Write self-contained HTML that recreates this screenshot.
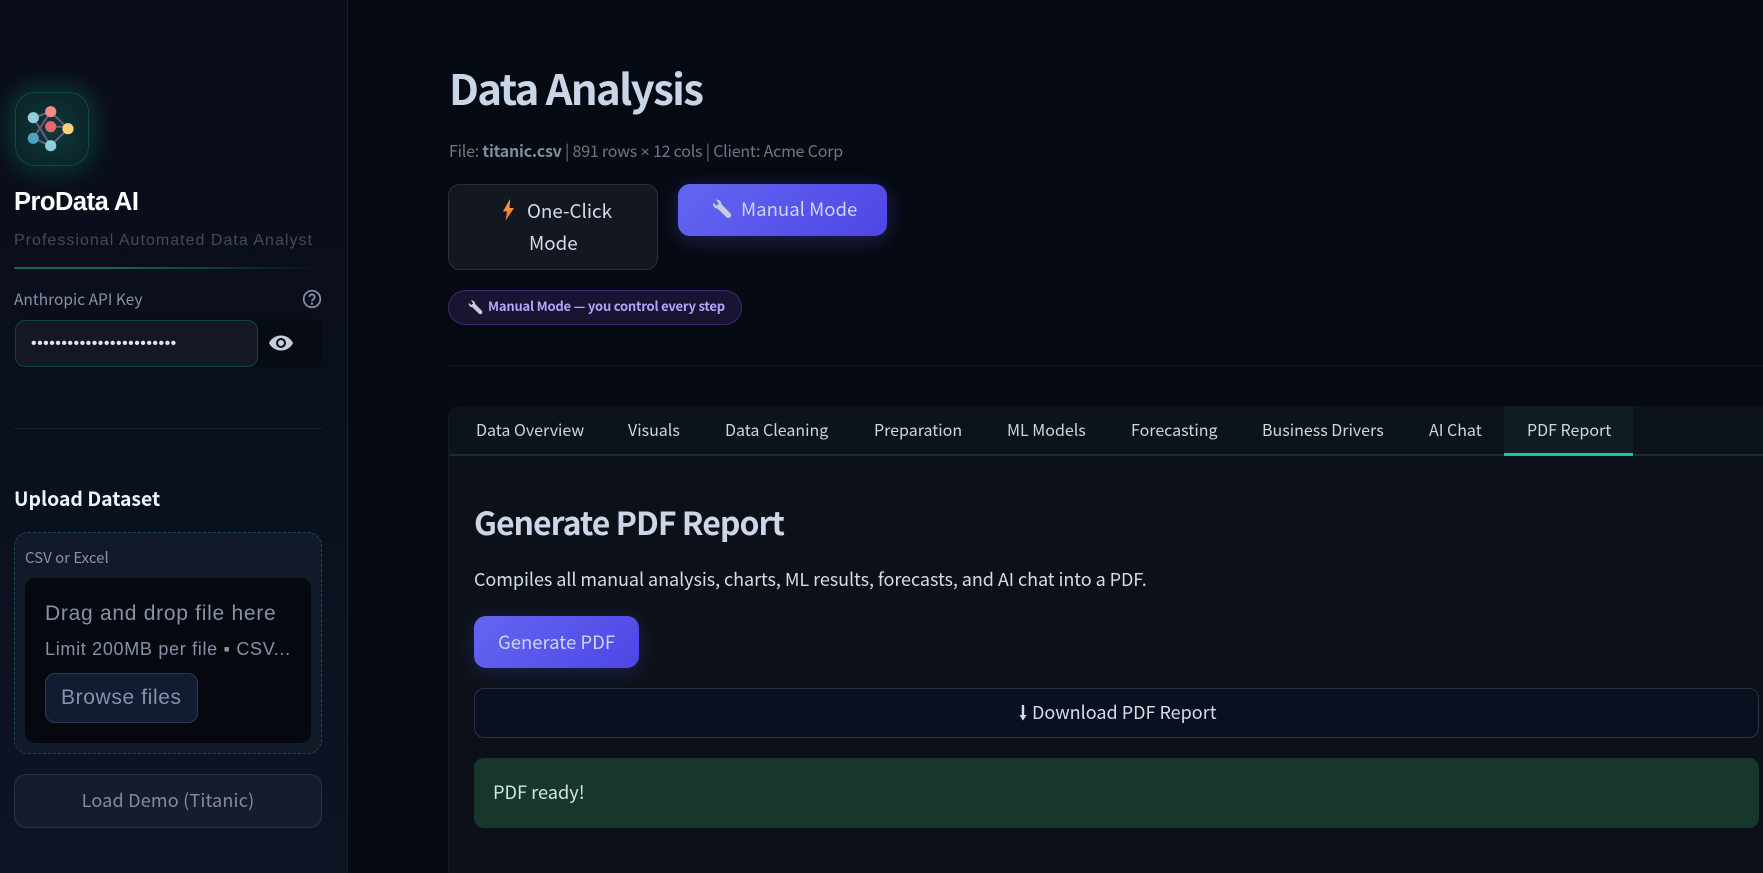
<!DOCTYPE html>
<html><head><meta charset="utf-8"><style>
*{box-sizing:border-box;margin:0;padding:0}
html,body{width:1763px;height:873px;overflow:hidden;background:#060a13}
body{position:relative;font-family:"Noto Sans CJK JP","Liberation Sans",sans-serif;color:#d5dce8}
.a{position:absolute;white-space:nowrap}
.g{font-family:"Liberation Sans","DejaVu Sans",sans-serif}
.tab{position:absolute;top:415px;line-height:28px;font-size:16px;color:#cdd5e0;white-space:nowrap}
</style></head><body>
<div class="a" style="left:0;top:0;width:348px;height:873px;background:linear-gradient(180deg,#0a0e18 0%,#0a0f1c 45%,#0d1424 100%);border-right:1px solid #12232b"></div>
<div class="a" style="left:15px;top:92px;width:74px;height:74px;border-radius:20px;background:radial-gradient(circle,#0d3a3a 0%,#0b1f25 100%);border:1px solid #0f4a46;box-shadow:0 0 28px rgba(16,185,150,.36)"></div>
<svg class="a" style="left:15px;top:92px" width="74" height="74" viewBox="15 92 74 74">
<g stroke="#6b5b7b" stroke-width="2" fill="none"><path d="M33.300 117.700L50.700 111.700L68 128.700L50.700 145.700L33.300 138.300M33.300 117.700L50.700 145.700M50.700 111.700L33.300 138.300M50.700 126.700H68"/></g>
<circle cx="50.700" cy="111.700" r="5.600" fill="#f28b82"/><circle cx="33.300" cy="117.700" r="5.600" fill="#8ecfdc"/><circle cx="50.700" cy="126.700" r="5.600" fill="#ec6472"/><circle cx="68" cy="128.700" r="5.600" fill="#fdd27a"/><circle cx="33.300" cy="138.300" r="5.600" fill="#50a0c0"/><circle cx="50.700" cy="145.700" r="5.600" fill="#8ecfdc"/></svg>
<div class="a g" style="left:14px;top:187px;line-height:30px;font-size:25.500px;font-weight:700;color:#fff;letter-spacing:-.5px">ProData AI</div>
<div class="a g" style="left:14px;top:231px;line-height:20px;font-size:16px;color:#414b5e;letter-spacing:1.020px">Professional Automated Data Analyst</div>
<div class="a" style="left:14px;top:267px;width:308px;height:2px;background:linear-gradient(90deg,#0f6b5c,#0f6b5c 30%,transparent)"></div>
<div class="a" style="left:14px;top:287px;line-height:24px;font-size:15.500px;color:#8792a6">Anthropic API Key</div>
<svg class="a" style="left:302px;top:289px" width="20" height="20" viewBox="0 0 20 20"><circle cx="10" cy="10" r="8.300" fill="none" stroke="#8792a6" stroke-width="1.700"/><path d="M7.400 8a2.600 2.600 0 1 1 4 2.200c-.9.600-1.400 1-1.400 2" fill="none" stroke="#8792a6" stroke-width="1.700"/><circle cx="10" cy="14.600" r="1.100" fill="#8792a6"/></svg>
<div class="a" style="left:15px;top:319px;width:307px;height:49px;background:#070b13;border-radius:8px"></div>
<div class="a" style="left:15px;top:320px;width:243px;height:47px;background:#131822;border:1px solid #124440;border-radius:10px"></div>
<div class="a" style="left:31px;top:336px;line-height:16px;font-size:16px;letter-spacing:.47px;color:#dbe6f2;font-family:'Liberation Sans',sans-serif">••••••••••••••••••••••••</div>
<svg class="a" style="left:268px;top:333px" width="26" height="20" viewBox="0 0 26 20"><path fill="#c5cfdb" fill-rule="evenodd" d="M13 2.500C7.600 2.500 3 5.600 1 10c2 4.400 6.600 7.500 12 7.500s10-3.100 12-7.500c-2-4.400-6.600-7.500-12-7.500zm0 12.500a5 5 0 1 1 0-10 5 5 0 0 1 0 10zm0-8a3 3 0 1 0 0 6 3 3 0 0 0 0-6z"/></svg>
<div class="a" style="left:14px;top:428px;width:308px;height:1px;background:#1a202c"></div>
<div class="a" style="left:14px;top:484px;line-height:28px;font-size:19.400px;font-weight:700;color:#eef3f9">Upload Dataset</div>
<div class="a" style="left:14px;top:532px;width:308px;height:222px;background:#121a2a;border:1px dashed #134a4a;border-radius:14px"></div>
<div class="a" style="left:25px;top:547px;line-height:22px;font-size:15px;color:#8792a6">CSV or Excel</div>
<div class="a" style="left:25px;top:578px;width:286px;height:165px;background:#05080f;border-radius:10px"></div>
<div class="a g" style="left:45px;top:601px;line-height:26px;font-size:21px;color:#8592a8;letter-spacing:.72px">Drag and drop file here</div>
<div class="a g" style="left:45px;top:638px;line-height:22px;font-size:18px;color:#8592a8;letter-spacing:.69px">Limit 200MB per file ▪ CSV...</div>
<div class="a" style="left:45px;top:673px;width:153px;height:50px;background:#111c33;border:1px solid #303a50;border-radius:10px"></div>
<div class="a g" style="left:61px;top:685px;line-height:26px;font-size:21px;color:#8592a8;letter-spacing:.62px">Browse files</div>
<div class="a" style="left:14px;top:774px;width:308px;height:54px;background:#161c2b;border:1px solid #2a3142;border-radius:12px;text-align:center;line-height:50px;font-size:18px;color:#7f8ca3;letter-spacing:.2px">Load Demo (Titanic)</div>

<div class="a" style="left:449px;top:56px;line-height:64px;font-size:42px;font-weight:700;color:#c9d6e8;letter-spacing:-1.700px">Data Analysis</div>
<div class="a" style="left:449px;top:138px;line-height:24px;font-size:16px;color:#6f7785;letter-spacing:-.21px">File: <b style="font-weight:700;color:#848c99">titanic.csv</b> | 891 rows <span class="g">×</span> 12 cols | Client: Acme Corp</div>
<div class="a" style="left:448px;top:184px;width:210px;height:86px;background:#131720;border:1px solid #2a2f3a;border-radius:12px"></div>
<svg class="a" style="left:502px;top:199px" width="13" height="22" viewBox="0 0 13 22"><defs><linearGradient id="l" x1="0" y1="0" x2="0" y2="1"><stop offset="0" stop-color="#fbb040"/><stop offset="1" stop-color="#f0603a"/></linearGradient></defs><path fill="url(#l)" d="M8 0L1 12.500h4L3.500 22 12 9H7.500z"/></svg>
<div class="a" style="left:527px;top:195px;line-height:32px;font-size:18.800px;color:#d3dcec">One-Click</div>
<div class="a" style="left:529px;top:227px;line-height:32px;font-size:18.800px;color:#d3dcec">Mode</div>
<div class="a" style="left:678px;top:184px;width:209px;height:52px;border-radius:12px;background:linear-gradient(135deg,#6366f1,#4f46e5);box-shadow:0 4px 20px rgba(99,102,241,.28)"></div>
<svg class="a" style="left:712px;top:199px" width="20" height="20" viewBox="0 0 20 20"><path fill="#c9cbdb" d="M1 3.800L4.600 6.700L6.900 4.400L4 .8C6.800.2 9.300 2 9.500 5.200L18.300 14.200A2.700 2.700 0 0 1 14.500 18.200L5.600 9.600C2.800 9.900.6 7 1 3.800Z"/></svg>
<div class="a" style="left:741px;top:193px;line-height:32px;font-size:18.600px;color:#ccd4f5">Manual Mode</div>
<div class="a" style="left:448px;top:290px;width:294px;height:35px;background:#1a1433;border:1px solid #3b2a6e;border-radius:18px"></div>
<svg class="a" style="left:468px;top:300px" width="15" height="15" viewBox="0 0 20 20"><path fill="#c9cbdb" d="M1 3.800L4.600 6.700L6.900 4.400L4 .8C6.800.2 9.300 2 9.500 5.200L18.300 14.200A2.700 2.700 0 0 1 14.500 18.200L5.600 9.600C2.800 9.900.6 7 1 3.800Z"/></svg>
<div class="a" style="left:488px;top:295px;line-height:22px;font-size:13px;font-weight:700;color:#b2a4fb;letter-spacing:-.22px">Manual Mode — you control every step</div>
<div class="a" style="left:448px;top:365px;width:1315px;height:1px;background:#121722"></div>

<div class="a" style="left:448px;top:406px;width:1315px;height:467px;background:#0c1119;border-left:1px solid #141a24;border-top-left-radius:12px"></div>
<div class="a" style="left:449px;top:406px;width:1314px;height:50px;background:#0d131b;border-bottom:2px solid #1e2a32;border-top-left-radius:12px"></div>
<div class="a" style="left:1504px;top:406px;width:129px;height:50px;background:#0f1c22;border-bottom:3px solid #10c9a0"></div>
<div class="tab" style="left:476px">Data Overview</div>
<div class="tab" style="left:628px">Visuals</div>
<div class="tab" style="left:725px">Data Cleaning</div>
<div class="tab" style="left:874px">Preparation</div>
<div class="tab" style="left:1007px">ML Models</div>
<div class="tab" style="left:1131px">Forecasting</div>
<div class="tab" style="left:1262px">Business Drivers</div>
<div class="tab" style="left:1429px">AI Chat</div>
<div class="tab" style="left:1527px">PDF Report</div>
<div class="a" style="left:474px;top:498px;line-height:48px;font-size:32px;font-weight:700;color:#ccd6e6;letter-spacing:-1px">Generate PDF Report</div>
<div class="a" style="left:474px;top:565px;line-height:28px;font-size:18px;letter-spacing:-.055px;color:#d5dce8">Compiles all manual analysis, charts, ML results, forecasts, and AI chat into a PDF.</div>
<div class="a" style="left:474px;top:616px;width:165px;height:52px;border-radius:12px;background:linear-gradient(135deg,#6366f1,#4f46e5);box-shadow:0 4px 20px rgba(99,102,241,.22);text-align:center;line-height:52px;font-size:18.500px;color:#ccd4f5">Generate PDF</div>
<div class="a" style="left:474px;top:688px;width:1285px;height:50px;background:#0a1020;border:1px solid #2b3240;border-radius:10px"></div>
<svg class="a" style="left:1018px;top:703px" width="10" height="19" viewBox="0 0 10 19"><path fill="#d5dce8" d="M3.800 2h2.400v10h2.300L5 17.500 1.500 12h2.300z"/></svg>
<div class="a" style="left:1032px;top:698px;line-height:28px;font-size:18px;color:#d5dce8">Download PDF Report</div>
<div class="a" style="left:474px;top:758px;width:1285px;height:70px;background:#17372c;border-radius:10px"></div>
<div class="a" style="left:493px;top:778px;line-height:28px;font-size:18.200px;color:#d7e6dc">PDF ready!</div>
</body></html>
